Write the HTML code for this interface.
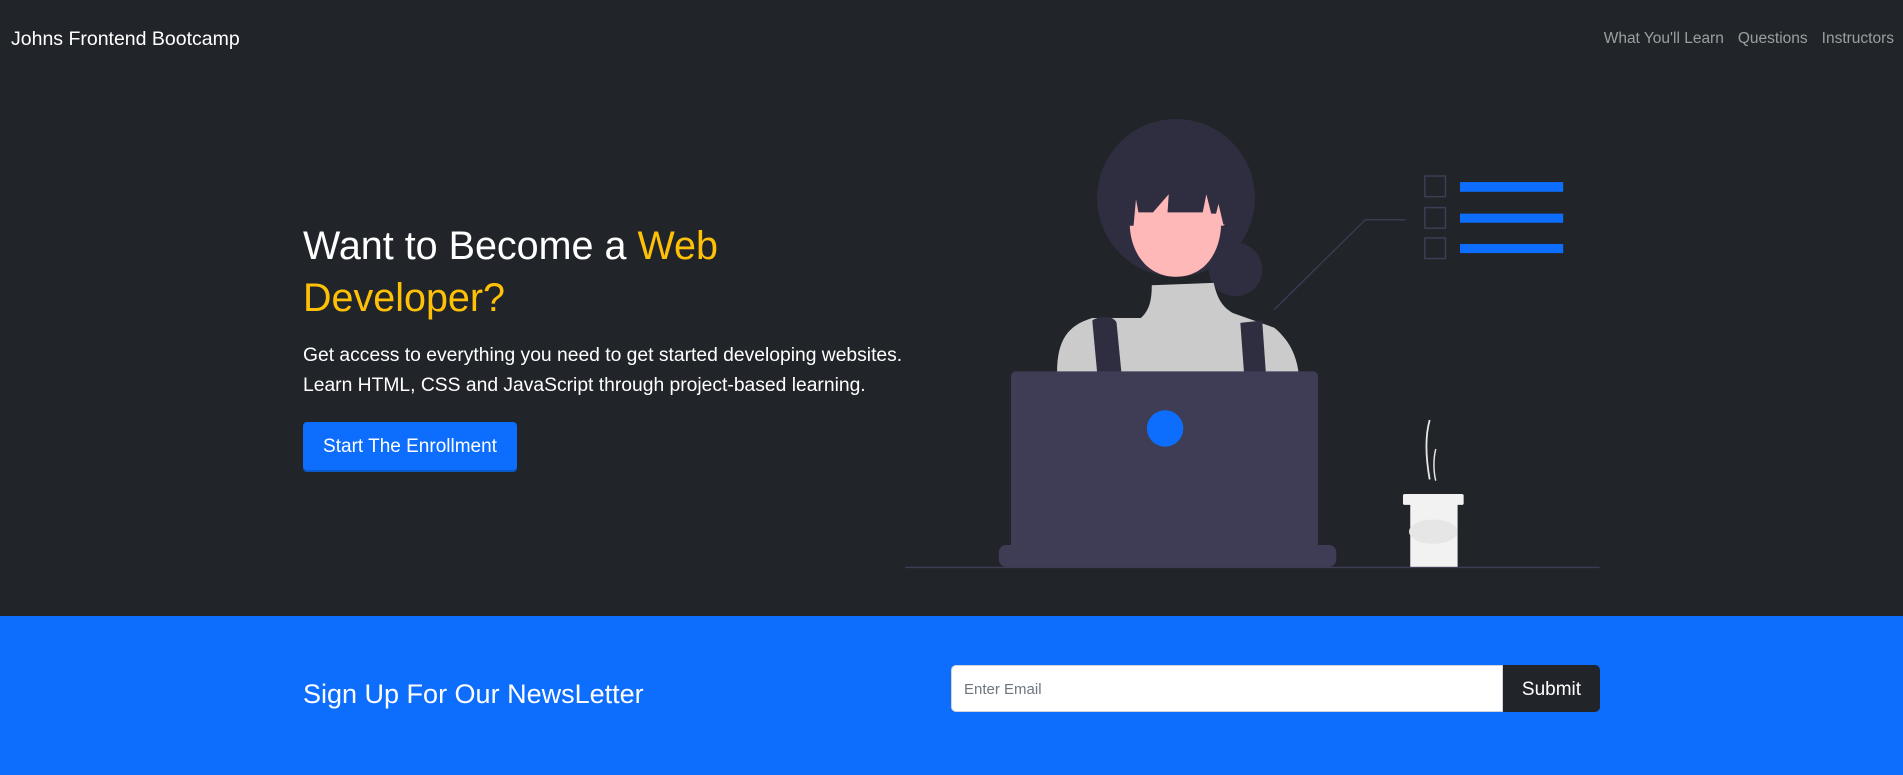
<!DOCTYPE html>
<html><head><meta charset="utf-8"><style>
*{box-sizing:border-box;margin:0;padding:0}
html,body{width:1903px;height:775px;overflow:hidden;background:#212529;font-family:"Liberation Sans",sans-serif}
.hero{position:absolute;left:0;top:0;width:1903px;height:616px;background:#212529}
.brand{position:absolute;left:11px;top:28px;color:#fff;font-size:19.5px}
.nav{position:absolute;right:9px;top:30px;color:rgba(255,255,255,.55);font-size:15.5px}
.nav span{margin-left:14px}
h1{position:absolute;left:303px;top:220px;color:#fff;font-weight:400;font-size:39.5px;line-height:52px}
h1 .y{color:#ffc107}
.lead{position:absolute;left:303px;top:341px;color:#fff;font-weight:300;font-size:19.3px;line-height:30px}
.btn{position:absolute;left:303px;top:422px;width:214px;height:48px;background:#0d6efd;color:#fff;border-radius:4px;font-size:19px;line-height:50px;text-align:center;box-shadow:0 2px 0 #0a58ca}
.news{position:absolute;left:0;top:616px;width:1903px;height:159px;background:#0d6efd}
.news h3{position:absolute;left:303px;top:63px;color:#fff;font-weight:400;font-size:27px}
.inp{position:absolute;left:951px;top:49px;width:552px;height:47px;background:#fff;border:1px solid #ced4da;border-radius:5px 0 0 5px;font-size:15px;color:#6c757d;padding:15px 12px}
.sub{position:absolute;left:1503px;top:49px;width:97px;height:47px;background:#212529;color:#fff;border-radius:0 5px 5px 0;font-size:19px;line-height:49px;text-align:center}
svg{position:absolute;left:0;top:0}
</style></head><body>
<div class="hero">
<div class="brand">Johns Frontend Bootcamp</div>
<div class="nav"><span>What You'll Learn</span><span>Questions</span><span>Instructors</span></div>
<h1>Want to Become a <span class="y">Web<br>Developer?</span></h1>
<div class="lead">Get access to everything you need to get started developing websites.<br>Learn HTML, CSS and JavaScript through project-based learning.</div>
<div class="btn">Start The Enrollment</div>
</div>
<svg width="1903" height="616" viewBox="0 0 1568 507.5">
<line x1="746" y1="467.5" x2="1318" y2="467.5" stroke="#3f3d56" stroke-width="1.2"/>
<path d="M1050 255 L1125 181 L1158 181" stroke="#3f3d56" stroke-width="1" fill="none"/>
<g fill="none" stroke="#3f3d56" stroke-width="1.2">
<rect x="1174" y="145" width="17" height="17"/><rect x="1174" y="171" width="17" height="17"/><rect x="1174" y="196" width="17" height="17"/></g>
<g fill="#0d6efd"><rect x="1203" y="150" width="85" height="8"/><rect x="1203" y="176" width="85" height="7.5"/><rect x="1203" y="201" width="85" height="7.5"/></g>
<circle cx="969" cy="163" r="65" fill="#2f2e41"/>
<circle cx="1018" cy="222" r="22" fill="#2f2e41"/>
<path d="M871 307 C871 280 880 268 900 262 L940 262 C948 255 949 245 949 235 L1000 233 C1003 245 1006 252 1016 258 L1050 270 C1062 280 1068 292 1070 307 Z" fill="#cbcbcb"/>
<path d="M900 264 C906 260 918 260 920 266 L924 307 L904 307 Z" fill="#2f2e41"/>
<path d="M1022 266 L1040 264 L1043 307 L1025 307 Z" fill="#2f2e41"/>
<path d="M931 160 L931 188 C933 212 948 228 969 228 C990 228 1004 212 1006 188 L1006 160 Z" fill="#ffb8b8"/>
<ellipse cx="931" cy="180" rx="4" ry="6" fill="#ffb8b8"/><ellipse cx="1007" cy="180" rx="4" ry="6" fill="#ffb8b8"/>
<path d="M925 150 L1012 150 L1012 185 L1008 185 L1004 168 L1002 176 L998 176 L994 160 L991 175 L962 175 L963 160 L950 175 L938 175 L936 164 L934 186 L925 186 Z" fill="#2f2e41"/>
<rect x="833" y="306" width="253" height="155" rx="4" fill="#3f3d56"/>
<rect x="823" y="449" width="278" height="18" rx="6" fill="#3f3d56"/>
<circle cx="960" cy="353" r="15" fill="#0d6efd"/>
<path d="M1178 346 C1174 360 1175 378 1178 395" stroke="#e6e6e6" stroke-width="1.5" fill="none"/>
<path d="M1183 370 C1181 378 1181 388 1183 396" stroke="#e6e6e6" stroke-width="1.2" fill="none"/>
<rect x="1162" y="414" width="39" height="53" fill="#f2f2f2"/>
<ellipse cx="1181" cy="438" rx="20" ry="10" fill="#e6e6e6"/>
<rect x="1156" y="407" width="50" height="9" rx="1.5" fill="#f2f2f2"/>
</svg>
<div class="news">
<h3>Sign Up For Our NewsLetter</h3>
<div class="inp">Enter Email</div>
<div class="sub">Submit</div>
</div>
</body></html>
